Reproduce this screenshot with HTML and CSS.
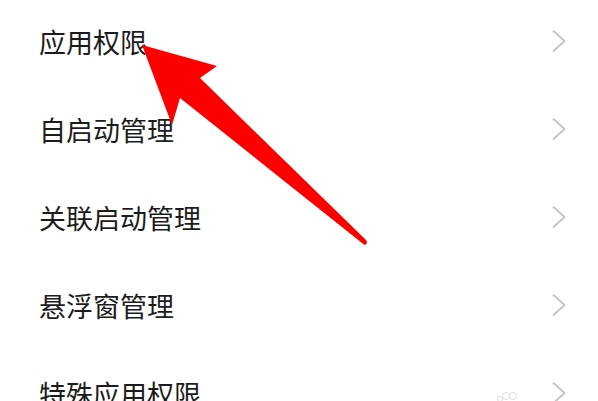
FILE: index.html
```html
<!DOCTYPE html>
<html lang="zh-CN">
<head>
<meta charset="utf-8">
<title>权限设置</title>
<link rel="stylesheet" href="styles.css">
</head>
<body>
<div class="screen">
  <ul class="menu">
    <li class="row"><span class="label">应用权限</span><svg class="chev" viewBox="0 0 16 24"><path d="M2 1.5 L13.5 12 L2 22.5"/></svg></li>
    <li class="row"><span class="label">自启动管理</span><svg class="chev" viewBox="0 0 16 24"><path d="M2 1.5 L13.5 12 L2 22.5"/></svg></li>
    <li class="row"><span class="label">关联启动管理</span><svg class="chev" viewBox="0 0 16 24"><path d="M2 1.5 L13.5 12 L2 22.5"/></svg></li>
    <li class="row"><span class="label">悬浮窗管理</span><svg class="chev" viewBox="0 0 16 24"><path d="M2 1.5 L13.5 12 L2 22.5"/></svg></li>
    <li class="row"><span class="label">特殊应用权限</span><svg class="chev" viewBox="0 0 16 24"><path d="M2 1.5 L13.5 12 L2 22.5"/></svg></li>
  </ul>
  <svg class="watermark" viewBox="0 0 26 12">
    <circle cx="5" cy="9" r="2.5"/>
    <circle cx="11" cy="6" r="3.5"/>
    <circle cx="18" cy="6" r="3.5"/>
  </svg>
  <svg class="arrow" viewBox="0 0 598 401">
    <path d="M142 45 L217 66 L200 78 L366.5 240.5 Q368 244 364.5 245 L180 98 L172 125 Z"/>
  </svg>
</div>
</body>
</html>
```
FILE: styles.css
```css
html, body {
  margin: 0;
  padding: 0;
  background: #ffffff;
}
.screen {
  position: relative;
  width: 598px;
  height: 401px;
  overflow: hidden;
  background: #ffffff;
}
.menu {
  list-style: none;
  margin: 0;
  padding: 0;
  margin-top: -3px;
}
.row {
  height: 88px;
  display: flex;
  align-items: center;
  justify-content: space-between;
  padding: 0 31px 0 39px;
}
.label {
  font-family: "Noto Sans CJK SC", "Noto Sans", sans-serif;
  font-size: 27px;
  color: #1c1c1c;
  line-height: 1;
}
.chev {
  width: 16px;
  height: 24px;
  fill: none;
  stroke: #c6c6c6;
  stroke-width: 2;
}
.arrow {
  position: absolute;
  left: 0;
  top: 0;
  width: 598px;
  height: 401px;
  fill: #fc0000;
}
.watermark {
  position: absolute;
  left: 495px;
  top: 390px;
  width: 26px;
  height: 12px;
  fill: none;
  stroke: #dcdcdc;
  stroke-width: 1;
}
```
